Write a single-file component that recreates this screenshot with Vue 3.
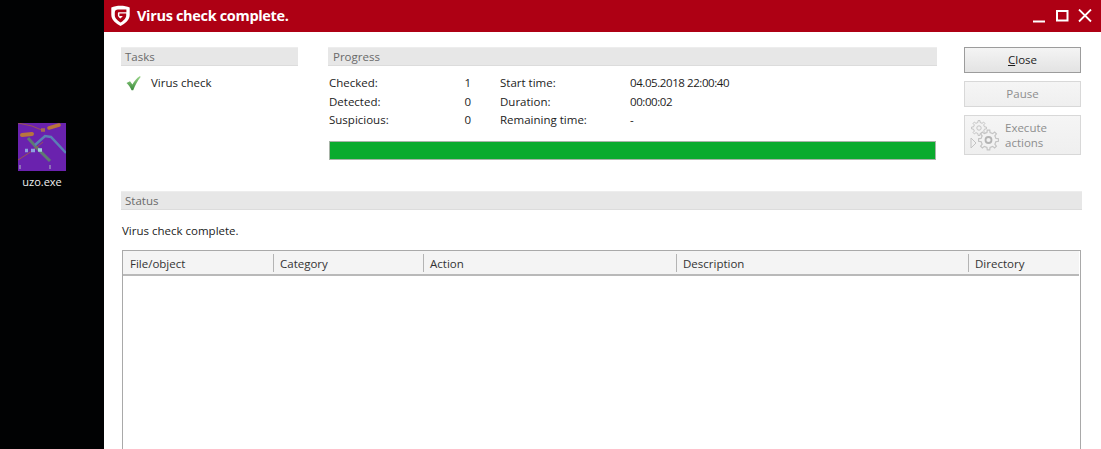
<template>
  <div class="page">
    <aside class="desktop">
      <svg class="file-icon" viewBox="0 0 48 48" width="48" height="48">
        <rect width="48" height="48" fill="#6a22ae" />
        <path d="M0 0 L14 3 L26 8" stroke="#a5613f" stroke-width="1" fill="none" opacity=".8" />
        <path d="M4 12 L14 11" stroke="#b8753c" stroke-width="4" stroke-linecap="round" />
        <path d="M31 5 L41 2" stroke="#b8753c" stroke-width="3.5" stroke-linecap="round" />
        <path d="M23 7 H27" stroke="#a86a55" stroke-width="3.5" />
        <path d="M10 15 L18 24 L32 38" stroke="#5f7a72" stroke-width="3" fill="none" />
        <path d="M17 22 L27 13 L33 14 L48 30" stroke="#5b7fb5" stroke-width="2.5" fill="none" />
        <path d="M0 37 L14 28 L25 19" stroke="#a5613f" stroke-width="1" fill="none" opacity=".8" />
        <path d="M7 27.5 H10 M13 27.5 H17" stroke="#8f9fe0" stroke-width="3.5" />
        <path d="M20 27 H24" stroke="#9fd0d8" stroke-width="3.5" />
        <path d="M2 42 V46 M32 42 V46" stroke="#8d70b8" stroke-width="2" />
      </svg>
      <span class="file-name">uzo.exe</span>
    </aside>

    <main class="window">
      <header class="titlebar">
        <svg class="logo" viewBox="0 0 19 21" width="19" height="21">
          <path d="M0.3 2.6 C5.5 0.2 13.5 0.2 18.7 2.6 V10 C18.7 14.8 14 18.8 9.5 21 C5 18.8 0.3 14.8 0.3 10 Z" fill="#fff" />
          <path d="M15.4 4.4 H7 C5 4.4 3.8 5.6 3.8 7.6 V10.6 C3.8 13.2 6.8 15.9 9.5 17.4 C12.2 15.9 15.2 13.2 15.2 10.4 V8.6 H8.4 V11 H11.8 C11.2 12 10.4 12.8 9.5 13.5 C8.2 12.6 6.9 11.4 6.9 10.4 V8 C6.9 7.5 7.2 7.2 7.7 7.2 H15.4 Z" fill="#ae0014" />
        </svg>
        <h1 class="title">Virus check complete.</h1>
        <div class="win-controls">
          <svg viewBox="0 0 14 14" width="14" height="14"><path d="M1 12.5 H13" stroke="#fff" stroke-width="2" /></svg>
          <svg viewBox="0 0 14 14" width="14" height="14"><rect x="2" y="2" width="10.5" height="9.5" fill="none" stroke="#fff" stroke-width="2" /></svg>
          <svg viewBox="0 0 14 14" width="14" height="14"><path d="M1 0.5 L13 12.5 M13 0.5 L1 12.5" stroke="#fff" stroke-width="1.8" /></svg>
        </div>
      </header>

      <div class="content">
        <div class="top">
          <section class="tasks">
            <div class="band">Tasks</div>
            <div class="task">
              <svg viewBox="0 0 16 16" width="16" height="16">
                <defs>
                  <linearGradient id="chk" x1="0" y1="0" x2="0" y2="1">
                    <stop offset="0" stop-color="#9ad68a" />
                    <stop offset="1" stop-color="#3a8a3a" />
                  </linearGradient>
                </defs>
                <path d="M1.5 8 L5 6.3 L7.4 9.6 C9 6.3 11.6 3.2 15 1 L15.6 2 C12.8 5.6 10.2 10 8.2 15.2 H6.6 C5.4 12.6 3.6 10 1.5 8 Z" fill="url(#chk)" />
              </svg>
              <span>Virus check</span>
            </div>
          </section>

          <section class="progress">
            <div class="band">Progress</div>
            <div class="stats">
              <span>Checked:</span><span class="num">1</span><span>Start time:</span><span class="digits">04.05.2018 22:00:40</span>
              <span>Detected:</span><span class="num">0</span><span>Duration:</span><span class="digits">00:00:02</span>
              <span>Suspicious:</span><span class="num">0</span><span>Remaining time:</span><span>-</span>
            </div>
            <div class="bar"><div class="bar-fill"></div></div>
          </section>

          <div class="buttons">
            <button class="btn primary"><span><u>C</u>lose</span></button>
            <button class="btn disabled">Pause</button>
            <button class="btn disabled exec">
              <svg viewBox="0 0 30 32" width="30" height="32" fill="none" stroke="#c4c4c4">
                <path d="M1 19 L6 24 L1 29 Z" />
                <path :d="gear(9, 9, 7.5, 5.6, 8)" fill="#f2f2f2" />
                <circle cx="9" cy="9" r="2.2" />
                <path :d="gear(18.5, 21, 10, 7.6, 8)" fill="#f2f2f2" stroke-width="1.2" />
                <circle cx="18.5" cy="21" r="3" stroke="#b4b4b4" stroke-width="1.8" />
              </svg>
              <span class="exec-label">Execute<br />actions</span>
            </button>
          </div>
        </div>

        <section class="status">
          <div class="band">Status</div>
          <p class="status-text">Virus check complete.</p>
          <div class="table">
            <div class="thead">
              <div class="th" v-for="c in columns" :key="c.label" :style="{ width: c.width + 'px' }">{{ c.label }}</div>
            </div>
          </div>
        </section>
      </div>
    </main>
  </div>
</template>

<script setup>
const columns = [
  { label: 'File/object', width: 151 },
  { label: 'Category', width: 150 },
  { label: 'Action', width: 253 },
  { label: 'Description', width: 292 },
  { label: 'Directory', width: 111 }
]

function gear(cx, cy, outer, inner, teeth) {
  const pts = []
  const step = (Math.PI * 2) / teeth
  for (let i = 0; i < teeth; i++) {
    const a = i * step
    const w = step * 0.2
    const p = [
      [inner, a - w * 1.3],
      [outer, a - w * 0.8],
      [outer, a + w * 0.8],
      [inner, a + w * 1.3]
    ]
    for (const [r, t] of p) {
      pts.push((cx + r * Math.cos(t)).toFixed(2) + ' ' + (cy + r * Math.sin(t)).toFixed(2))
    }
  }
  return 'M' + pts.join(' L') + ' Z'
}
</script>

<style>
html, body { margin: 0; background: #000; overflow: hidden; }
</style>

<style scoped>
.page {
  display: flex;
  width: 1101px;
  height: 449px;
  overflow: hidden;
  font-family: "Open Sans", "Noto Sans", sans-serif;
  font-size: 11.5px;
  color: #1c1c1c;
  background: #000;
}
.desktop {
  width: 104px;
  flex: none;
  box-sizing: border-box;
  padding: 123px 20px 0 0;
  display: flex;
  flex-direction: column;
  align-items: center;
  background: #010203;
}
.file-icon { display: block; filter: blur(0.5px); }
.file-name {
  margin-top: 3px;
  color: #f0f0f0;
  font-size: 11px;
  line-height: 16px;
}
.window {
  flex: 1;
  display: flex;
  flex-direction: column;
  background: #fff;
  min-width: 0;
}
.titlebar {
  height: 32px;
  flex: none;
  display: flex;
  align-items: center;
  background: #ae0014;
  color: #fff;
  padding: 0 9px 0 7px;
}
.logo { flex: none; margin-bottom: 1px; }
.title {
  margin: 0 0 0 7px;
  font-size: 14.5px;
  font-weight: 700;
  line-height: 20px;
  letter-spacing: -0.33px;
  flex: 1;
}
.win-controls { display: flex; gap: 9px; align-items: center; }
.win-controls svg { display: block; }
.content {
  flex: 1;
  padding: 15px 19px 0 17px;
  display: flex;
  flex-direction: column;
}
.top { display: flex; height: 144px; }
.band {
  height: 19px;
  line-height: 18px;
  box-sizing: border-box;
  padding-left: 4px;
  background: #e7e7e7;
  border-top: 1px solid #ededed;
  border-bottom: 1px solid #dcdcdc;
  color: #6a6a6a;
}
.tasks { width: 177px; flex: none; }
.task {
  display: flex;
  align-items: center;
  margin: 9px 0 0 4px;
  line-height: 16px;
}
.task span { margin-left: 10px; }
.progress { width: 609px; flex: none; margin-left: 30px; }
.progress .band { padding-left: 5px; }
.stats {
  display: grid;
  grid-template-columns: 113px 58px 130px 1fr;
  grid-auto-rows: 18.5px;
  margin: 8px 0 0 1px;
  line-height: 18.5px;
}
.stats .num { text-align: right; padding-right: 29px; }
.digits { letter-spacing: -0.42px; }
.bar {
  margin: 11px 0 0 1px;
  width: 607px;
  height: 19px;
  box-sizing: border-box;
  border: 1px solid #a8b4a8;
  background: #fff;
}
.bar-fill { height: 100%; background: #0aab2e; }
.buttons {
  margin-left: 27px;
  width: 117px;
  flex: none;
  display: flex;
  flex-direction: column;
  gap: 8px;
}
.btn {
  font: inherit;
  padding: 0 0 2px;
  height: 26px;
  box-sizing: border-box;
  background: linear-gradient(#f3f3f3, #e4e4e4);
  border: 1px solid #a0a0a0;
  color: #1c1c1c;
}
.btn.primary { background: linear-gradient(#f4f4f4, #e3e3e3); border-color: #9c9c9c; }
.btn.disabled {
  background: linear-gradient(#f5f5f5, #efefef);
  border-color: #d8d8d8;
  color: #8e8e8e;
}
.btn.exec {
  height: 40px;
  display: flex;
  align-items: center;
  text-align: left;
  padding: 0 0 0 5px;
}
.exec-label { margin-left: 5px; line-height: 15px; }
.status-text { margin: 12px 0 0 1px; line-height: 18px; }
.table {
  margin: 10px 1px 0 1px;
  height: 240px;
  box-sizing: border-box;
  border: 1px solid #a9a9a9;
  border-bottom: 0;
  padding-right: 1px;
}
.thead {
  display: flex;
  height: 25px;
  box-sizing: border-box;
  background: #f4f4f4;
  border-bottom: 2px solid #b9b9b9;
}
.th {
  box-sizing: border-box;
  padding-left: 6px;
  line-height: 25px;
  color: #333;
  position: relative;
  flex: none;
}
.th:first-child { padding-left: 7px; }
.th:not(:last-child)::after {
  content: "";
  position: absolute;
  right: 0;
  top: 3px;
  bottom: 2px;
  width: 1px;
  background: #b4b4b4;
}
</style>
